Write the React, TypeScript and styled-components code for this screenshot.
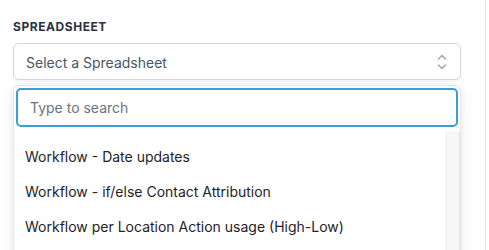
import React from "react";
import styled, { createGlobalStyle } from "styled-components";

const Global = createGlobalStyle`
  html, body { margin: 0; padding: 0; background: #ffffff; }
  body { font-family: Inter, "Noto Sans", sans-serif; -webkit-font-smoothing: antialiased; }
  * { box-sizing: border-box; }
`;

const Page = styled.div`
  width: 486px;
  height: 250px;
  border-right: 1px solid #e5e7eb;
  overflow: hidden;
`;

const Field = styled.div`
  padding: 19px 24px 0 13px;
  display: flex;
  flex-direction: column;
`;

const Label = styled.div`
  font-size: 12px;
  line-height: 16px;
  font-weight: 700;
  letter-spacing: 0.55px;
  color: #2a3241;
  text-transform: uppercase;
  margin-bottom: 8px;
`;

const SelectBox = styled.div`
  height: 37px;
  border: 1px solid #d4d6da;
  border-radius: 6px;
  display: flex;
  align-items: center;
  justify-content: space-between;
  padding: 1px 13px 0 12px;
  box-shadow: 0 1px 2px rgba(0, 0, 0, 0.05);
  font-size: 14px;
  color: #4b5563;
  background: #fff;
`;

const Panel = styled.div`
  margin-top: 5px;
  border: 1px solid #e5e7eb;
  border-radius: 6px 6px 0 0;
  padding: 2px 0 0 2px;
  background: #fff;
  box-shadow: 0 4px 16px rgba(0, 0, 0, 0.08), 0 0 6px rgba(0, 0, 0, 0.04);
  display: flex;
  flex-direction: column;
  height: 180px;
`;

const Search = styled.input`
  height: 39px;
  width: calc(100% - 2px);
  border: 2px solid #3c9ed6;
  border-radius: 5px;
  padding: 0 12px;
  font-family: Inter, "Noto Sans", sans-serif;
  font-size: 14px;
  color: #1f2937;
  outline: none;
  caret-color: #111;
  &::placeholder { color: #6b7280; }
`;

const ListArea = styled.div`
  flex: 1;
  margin-top: 4px;
  display: flex;
  align-items: stretch;
`;

const Options = styled.ul`
  list-style: none;
  margin: 0;
  padding: 8px 0 0 0;
  flex: 1;
`;

const Track = styled.div`
  width: 14px;
  background: #f7f7f7;
  border-left: 1px solid #ececec;
  border-right: 1px solid #e4e4e4;
`;

const Item = styled.li`
  height: 35px;
  display: flex;
  align-items: center;
  padding-left: 9px;
  font-size: 14px;
  color: #1f2328;
  white-space: nowrap;
`;

const UpDown = () => (
  <svg width="10" height="16" viewBox="0 0 10 16" fill="none" stroke="#a3a8b0" strokeWidth="1.5" strokeLinecap="round" strokeLinejoin="round">
    <path d="M1.5 5 L5 1.5 L8.5 5" />
    <path d="M1.5 11 L5 14.5 L8.5 11" />
  </svg>
);

const items = [
  "Workflow - Date updates",
  "Workflow - if/else Contact Attribution",
  "Workflow per Location Action usage (High-Low)",
];

export default function App() {
  return (
    <Page>
      <Global />
      <Field>
        <Label>Spreadsheet</Label>
        <SelectBox>
          <span>Select a Spreadsheet</span>
          <UpDown />
        </SelectBox>
        <Panel>
          <Search placeholder="Type to search" autoFocus />
          <ListArea>
            <Options>
              {items.map((t) => (
                <Item key={t}>{t}</Item>
              ))}
            </Options>
            <Track />
          </ListArea>
        </Panel>
      </Field>
    </Page>
  );
}
